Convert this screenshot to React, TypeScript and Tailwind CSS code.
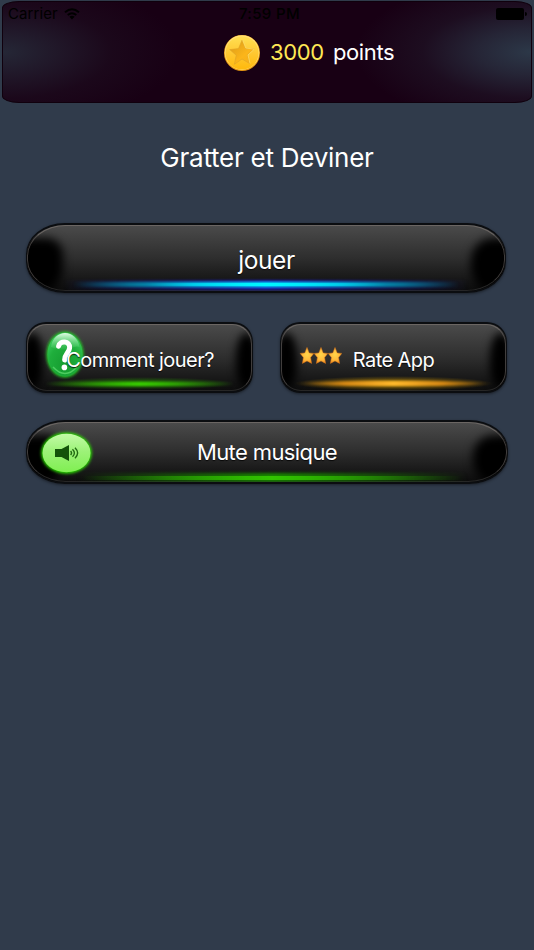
import React from 'react';

interface GlossyButtonProps {
  label: string;
  className: string;
  glow: React.ReactNode;
  labelClass: string;
  wide?: boolean;
  children?: React.ReactNode;
}

const GlossyButton: React.FC<GlossyButtonProps> = ({ label, className, glow, labelClass, wide, children }) => {
  return (
    <button
      className={`relative overflow-hidden flex-shrink-0 flex items-center justify-center border-[#0b0d10] bg-gradient-to-b from-[#4b4b4b] via-[#2e2e2e] to-[#0c0c0c] shadow-[0_1px_3px_rgba(0,0,0,0.45)] ${wide ? 'border-y-2 border-x' : 'border-y-2 border-x'} ${className}`}
    >
      {wide ? (
        <>
          <span className="absolute -left-[20px] top-[13px] -bottom-[4px] w-[56px] [border-radius:40%_30%_50%_50%] bg-black blur-[5px]" />
          <span className="absolute -right-[20px] top-[13px] -bottom-[4px] w-[54px] [border-radius:40%_40%_50%_50%] bg-black blur-[5px]" />
        </>
      ) : (
        <>
          <span className="absolute -left-[6px] top-[9px] bottom-[2px] w-[22px] [border-radius:45%] bg-black blur-[4px]" />
          <span className="absolute -right-[6px] top-[9px] bottom-[2px] w-[22px] [border-radius:45%] bg-black blur-[4px]" />
        </>
      )}
      <span className="absolute inset-0 rounded-[inherit] border border-[#6a6664]/60 border-t-[#6b6663] border-b-[#262626]" />
      {glow}
      {children}
      <span className={`relative whitespace-nowrap text-white [text-shadow:0_1px_1px_rgba(0,0,0,0.8)] ${labelClass}`}>{label}</span>
    </button>
  );
};

const WifiIcon = () => (
  <svg className="w-4 h-3" viewBox="0 0 16 12" fill="none" stroke="black" strokeWidth="1.9">
    <path d="M1 4.2 Q8 -1.7 15 4.2" />
    <path d="M3.7 7 Q8 3.4 12.3 7" />
    <path d="M5.4 8.8 Q8 6.9 10.6 8.8 L8 11.5Z" fill="black" stroke="none" />
  </svg>
);

const CoinIcon = () => (
  <svg className="w-[38px] h-[38px]" viewBox="0 0 38 38">
    <defs>
      <linearGradient id="coin" x1="0" y1="0" x2="0" y2="1">
        <stop offset="0" stopColor="#ffdf52" />
        <stop offset="0.5" stopColor="#ffc832" />
        <stop offset="1" stopColor="#ffb90c" />
      </linearGradient>
      <linearGradient id="coinStar" x1="0" y1="0" x2="1" y2="1">
        <stop offset="0" stopColor="#d99a18" />
        <stop offset="0.6" stopColor="#fbb51a" />
        <stop offset="1" stopColor="#f5ae19" />
      </linearGradient>
    </defs>
    <circle cx="19" cy="19" r="18" fill="#e79712" />
    <circle cx="19" cy="18.6" r="17.3" fill="#ffe17a" />
    <circle cx="19" cy="19" r="16.6" fill="url(#coin)" />
    <path d="M19 6.2 L22.4 14.2 L31.2 15 L24.6 20.8 L26.6 29.5 L19 25 L11.4 30.3 L13.2 21.2 L6.7 15.6 L15.5 14.6Z" fill="url(#coinStar)" stroke="#dda328" strokeWidth="0.6" strokeLinejoin="round" />
    <path d="M19.8 6.4 L22.8 14 L31.2 15.2 L25 21 L27 29.5" fill="none" stroke="#ffdc65" strokeWidth="0.8" />
  </svg>
);

const HelpIcon = () => (
  <svg className="absolute left-[16px] top-[5px] w-[44px] h-[54px]" viewBox="0 0 44 54">
    <defs>
      <radialGradient id="helpBall" cx="0.5" cy="0.75" r="0.7">
        <stop offset="0" stopColor="#149c2f" />
        <stop offset="0.65" stopColor="#1fae3c" />
        <stop offset="1" stopColor="#38c95a" />
      </radialGradient>
      <linearGradient id="helpShine" x1="0" y1="0" x2="0" y2="1">
        <stop offset="0" stopColor="#e8ffeb" stopOpacity="0.95" />
        <stop offset="1" stopColor="#5ad774" stopOpacity="0.15" />
      </linearGradient>
      <filter id="helpGlow" x="-30%" y="-30%" width="160%" height="160%">
        <feGaussianBlur stdDeviation="1.6" />
      </filter>
    </defs>
    <ellipse cx="22" cy="25.5" rx="18.5" ry="23" fill="#20cf28" filter="url(#helpGlow)" />
    <ellipse cx="22" cy="25.5" rx="17.5" ry="22" fill="url(#helpBall)" />
    <path d="M8 18 C9 9 16 4.1 22 4.1 C29 4.1 35.5 10 36.5 18 C30 15 26 25 8 18Z" fill="url(#helpShine)" />
    <path d="M10 38 Q22 51 34 38" fill="none" stroke="#62de72" strokeWidth="1.5" opacity="0.7" />
    <path d="M15.6 17.2 C16.6 11.2 27.4 11.6 26.6 19 C26 24.2 21.4 25 21.6 31" fill="none" stroke="white" strokeWidth="5" strokeLinecap="round" />
    <circle cx="21.4" cy="38.4" r="2.8" fill="white" />
  </svg>
);

const StarsIcon = () => (
  <svg className="absolute left-[17px] top-[21px] w-[44px] h-[22px]" viewBox="0 0 44 22">
    <defs>
      <radialGradient id="star" cx="0.5" cy="0.45" r="0.6">
        <stop offset="0" stopColor="#ffd64a" />
        <stop offset="0.6" stopColor="#ffb83a" />
        <stop offset="1" stopColor="#f28516" />
      </radialGradient>
    </defs>
    {[9, 23, 37].map(x => (
      <path
        key={x}
        transform={`translate(${x} 11)`}
        d="M0 -8.6 L2.2 -3.1 L6.8 -2.6 L3.6 1.4 L4.6 7.4 L0 4.9 L-4.6 7.4 L-3.6 1.4 L-6.8 -2.6 L-2.2 -3.1Z"
        fill="url(#star)"
        stroke="#d8761c"
        strokeWidth="0.5"
      />
    ))}
  </svg>
);

const SpeakerIcon = () => (
  <svg className="absolute left-[11px] top-[7px] w-[58px] h-[48px]" viewBox="0 0 58 48">
    <defs>
      <linearGradient id="speakerDisc" x1="0" y1="0" x2="0" y2="1">
        <stop offset="0" stopColor="#c3fba7" />
        <stop offset="0.45" stopColor="#9df279" />
        <stop offset="1" stopColor="#80ef52" />
      </linearGradient>
      <filter id="speakerGlow" x="-30%" y="-30%" width="160%" height="160%">
        <feGaussianBlur stdDeviation="1.5" />
      </filter>
    </defs>
    <ellipse cx="28.5" cy="24" rx="25.2" ry="20.6" fill="#2ce000" filter="url(#speakerGlow)" />
    <ellipse cx="28.5" cy="24" rx="24" ry="19.3" fill="url(#speakerDisc)" />
    <path d="M17 20 H23.5 L31 16 V32 L23.5 28 H17Z" fill="#14530a" />
    <g fill="none" stroke="#226a12" strokeWidth="1.4">
      <path d="M32.6 22 Q34.6 24 32.6 26" />
      <path d="M34.5 20.2 Q38.3 24 34.5 27.8" />
      <path d="M37 18.8 Q42.2 24 37 29.2" />
    </g>
  </svg>
);

const BlueGlow = () => (
  <>
    <span className="absolute left-[36px] right-[36px] bottom-[1px] h-[10px] bg-gradient-to-r from-transparent via-[#1a1fb4] to-transparent blur-[1.2px]" />
    <span className="absolute left-[38px] right-[38px] bottom-[4px] h-[5px] bg-[linear-gradient(90deg,transparent_2%,#066f92_16%,#00b4df_32%,#00e6ff_50%,#00b4df_68%,#066f92_84%,transparent_98%)] blur-[0.8px]" />
    <span className="absolute left-[120px] right-[120px] bottom-[5px] h-[3px] bg-gradient-to-r from-transparent via-[#00f6ff] to-transparent" />
  </>
);

const GreenGlow = () => (
  <>
    <span className="absolute left-[18px] right-[18px] bottom-[1px] h-[13px] bg-[radial-gradient(ellipse_at_center,rgba(45,175,0,0.7),transparent_70%)]" />
    <span className="absolute left-[18px] right-[18px] bottom-[5px] h-[4px] bg-gradient-to-r from-transparent via-[#38cf00] to-transparent blur-[0.8px]" />
  </>
);

const OrangeGlow = () => (
  <>
    <span className="absolute left-[12px] right-[12px] bottom-0 h-[15px] bg-[radial-gradient(ellipse_at_center,rgba(205,151,0,0.85),transparent_70%)]" />
    <span className="absolute left-[18px] right-[18px] bottom-[5px] h-[5px] rounded-[50%] bg-[linear-gradient(90deg,transparent,#d88915_24%,#ffb92c_50%,#d88915_76%,transparent)] blur-[0.8px]" />
  </>
);

const MusicGlow = () => (
  <>
    <span className="absolute left-[50px] right-[40px] bottom-0 h-[9px] bg-gradient-to-r from-transparent via-[#188600] to-transparent blur-[1.5px]" />
    <span className="absolute left-[55px] right-[45px] bottom-[2px] h-[4px] bg-gradient-to-r from-transparent via-[#32c400] to-transparent blur-[0.7px]" />
  </>
);

const App: React.FC = () => {
  return (
    <div className="w-[534px] h-[950px] overflow-hidden bg-[#303b4b] flex flex-col font-['Inter',sans-serif]">
      <header className="mt-px mx-[2px] h-[102px] flex-shrink-0 flex flex-col [border-radius:17px/7px] border border-[#10000d] bg-[radial-gradient(ellipse_175px_75px_at_100%_50%,#2c3848,rgba(42,50,66,0.75)_30%,rgba(38,38,54,0.35)_62%,transparent),radial-gradient(ellipse_175px_75px_at_0%_50%,#252736,rgba(36,34,50,0.7)_30%,rgba(34,26,42,0.3)_62%,transparent)] bg-[#180014]">
        <div className="h-6 px-[5px] pr-[4px] grid grid-cols-3 items-center text-[15px] text-black">
          <div className="flex items-center gap-[6px]">
            <span className="tracking-[0.1px]">Carrier</span>
            <WifiIcon />
          </div>
          <span className="text-center font-medium tracking-[0.35px] pl-[4px] whitespace-nowrap">7:59 PM</span>
          <div className="flex items-center justify-end gap-px">
            <span className="w-7 h-3 rounded-[2px] bg-black" />
            <span className="w-[2px] h-1 rounded-r-full bg-black" />
          </div>
        </div>
        <div className="pl-[220px] h-[53px] flex items-center">
          <CoinIcon />
          <span className="ml-[9px] w-[63px] text-[22px] tracking-[-0.4px] text-[#ffe854]">3000</span>
          <span className="text-[22px] tracking-[-0.4px] text-white">points</span>
        </div>
      </header>

      <h1 className="mt-[37px] h-9 leading-9 text-center text-[26px] tracking-[-0.25px] text-white whitespace-nowrap flex-shrink-0">Gratter et Deviner</h1>

      <main className="mt-[47px] pl-[26px] flex flex-col">
        <GlossyButton wide label="jouer" className="w-[480px] h-[70px] [border-radius:39px/31px]" labelClass="left-[0.5px] top-[2px] text-[24.5px] tracking-[-0.4px]" glow={<BlueGlow />} />
        <div className="mt-[29px] flex gap-[27px]">
          <GlossyButton label="Comment jouer?" className="w-[227px] h-[71px] rounded-[20px]" labelClass="left-[0.5px] top-[2px] text-[20px] tracking-[-0.55px]" glow={<GreenGlow />}>
            <HelpIcon />
          </GlossyButton>
          <GlossyButton label="Rate App" className="w-[227px] h-[71px] rounded-[20px]" labelClass="top-[2px] text-[20px] tracking-[-0.55px]" glow={<OrangeGlow />}>
            <StarsIcon />
          </GlossyButton>
        </div>
        <GlossyButton wide label="Mute musique" className="mt-[27px] w-[482px] h-[64px] [border-radius:39px/29px]" labelClass="top-0 text-[22px] tracking-[-0.6px]" glow={<MusicGlow />}>
          <SpeakerIcon />
        </GlossyButton>
      </main>
    </div>
  );
};

export default App;
